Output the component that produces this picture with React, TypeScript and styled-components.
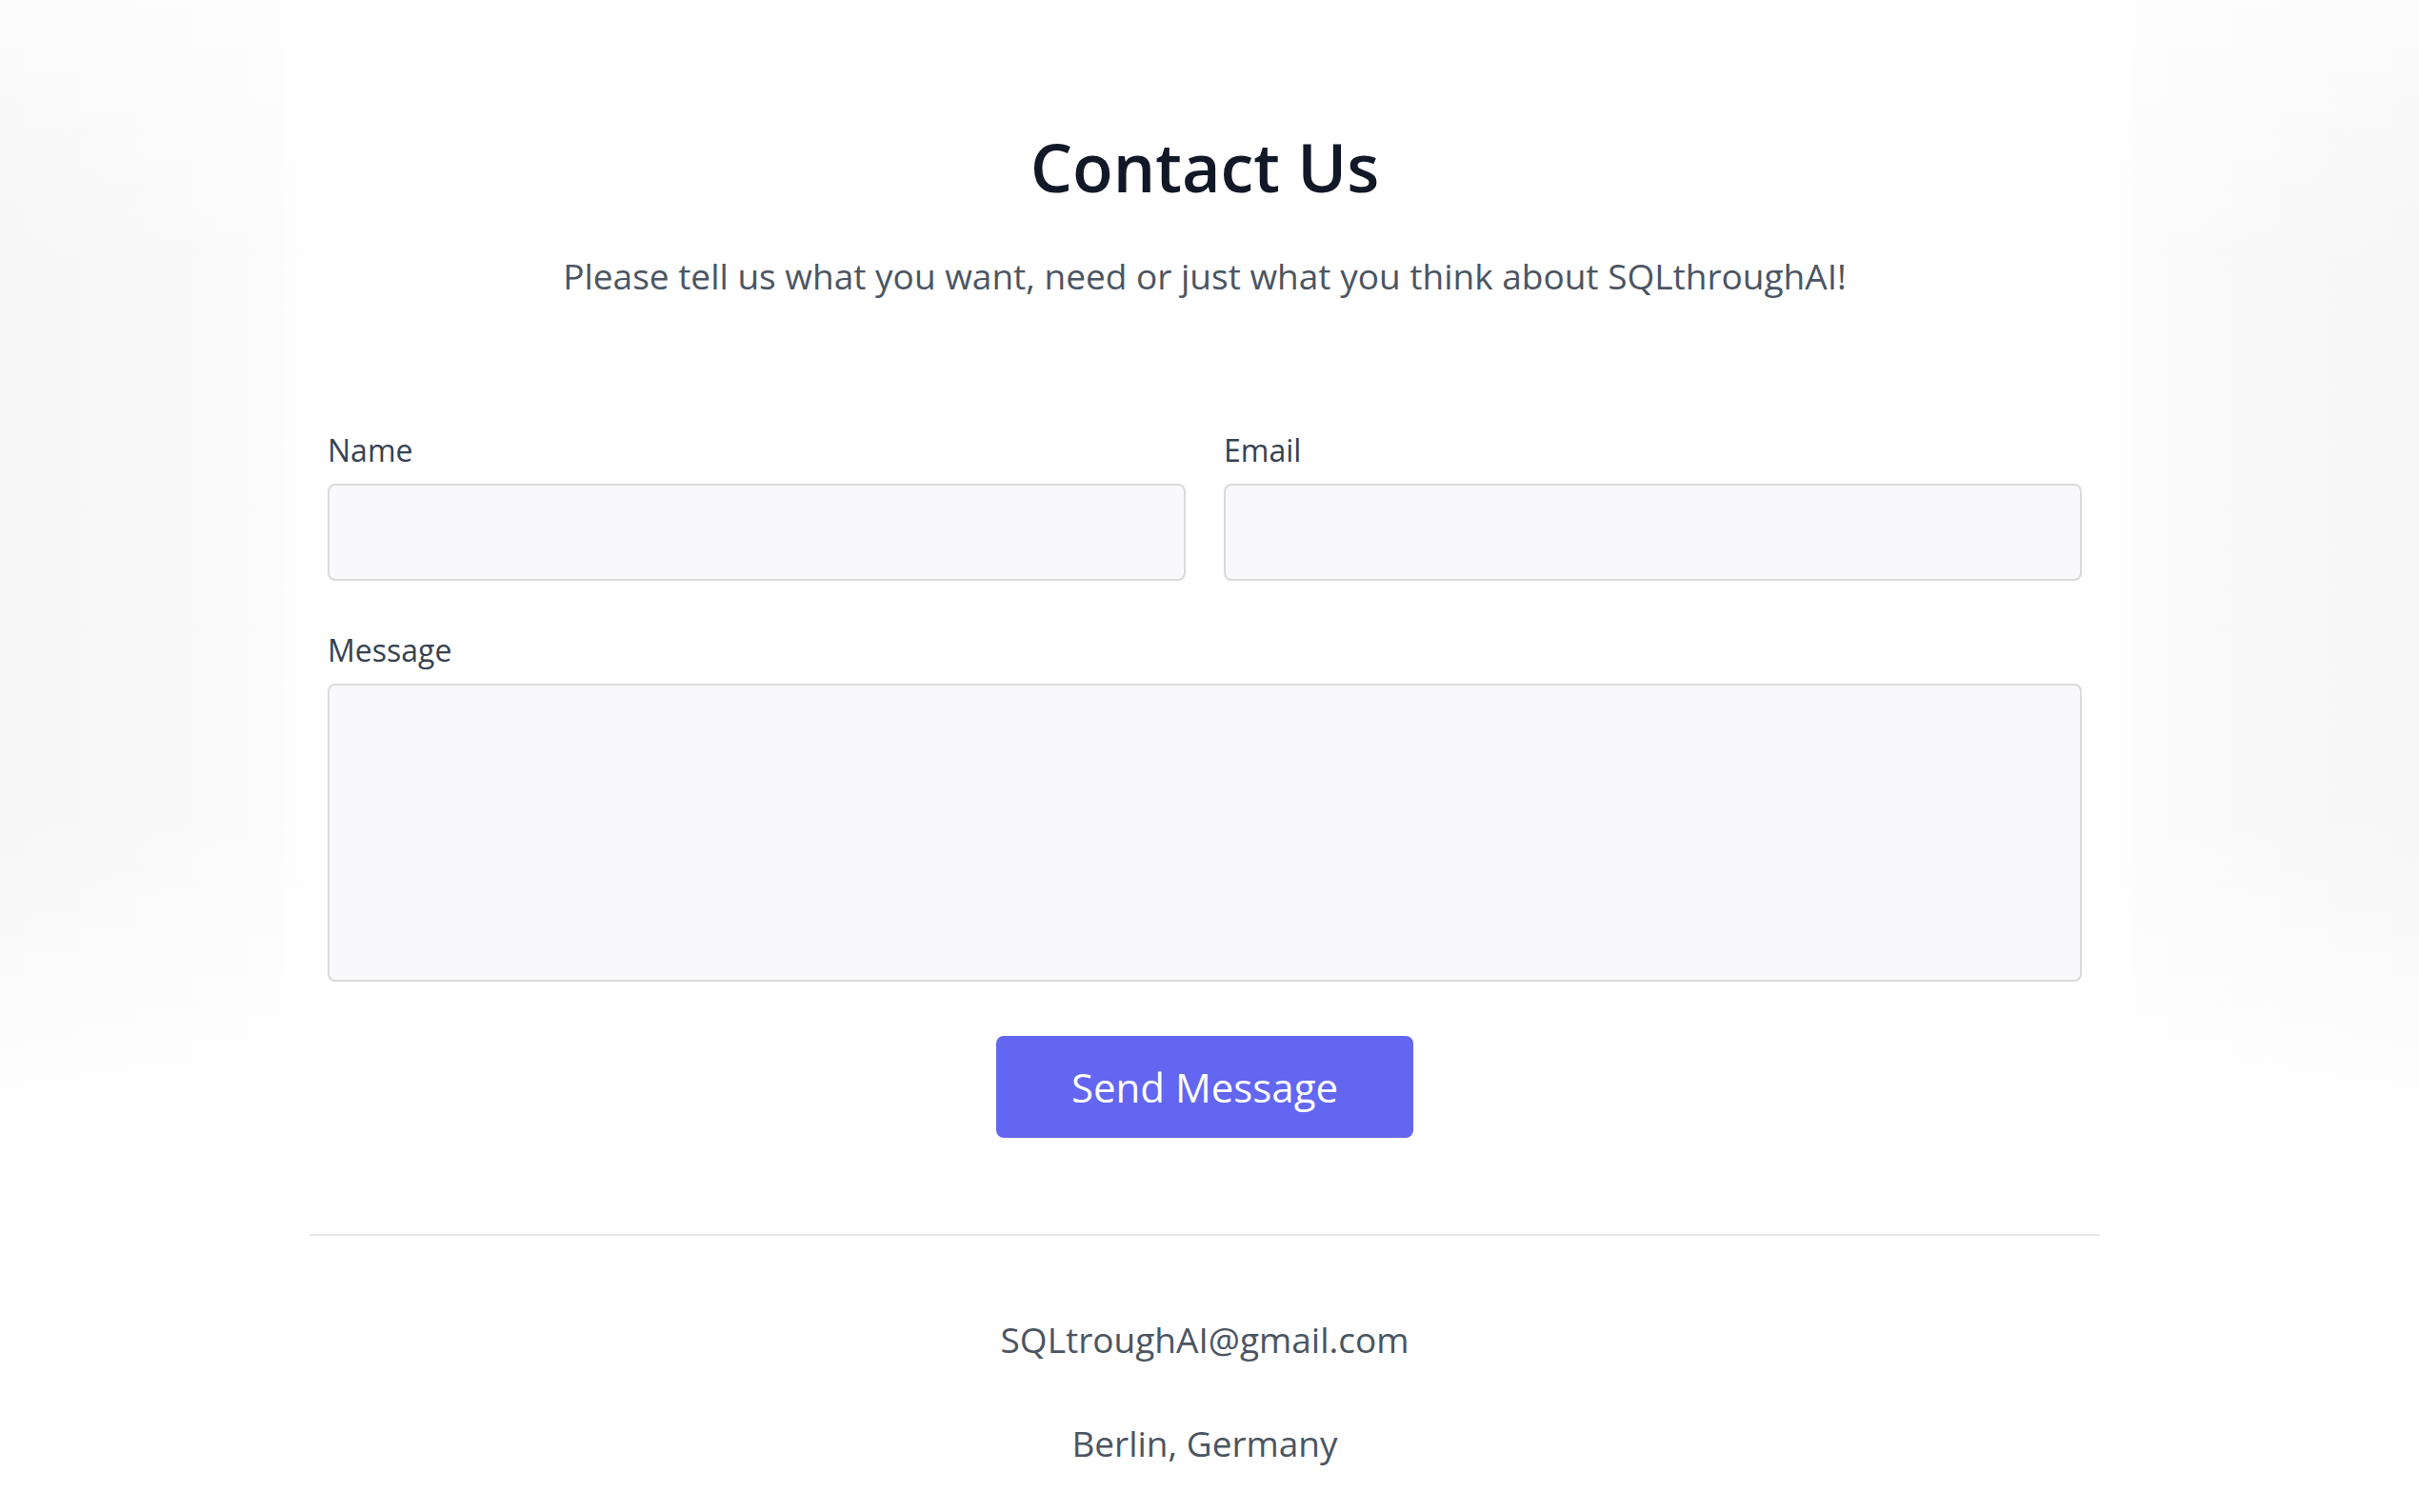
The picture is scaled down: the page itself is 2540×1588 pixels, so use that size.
import { createGlobalStyle, styled } from "styled-components";

const GlobalStyle = createGlobalStyle`
  * {
    box-sizing: border-box;
  }
  body {
    margin: 0;
    font-family: "Open Sans", "Noto Sans", sans-serif;
    background: #ffffff;
  }
`;

function App() {
  return (
    <>
      <GlobalStyle />
      <Page>
        <Main>
          <Title>Contact Us</Title>
          <Subtitle>
            Please tell us what you want, need or just what you think about
            SQLthroughAI!
          </Subtitle>
          <Form onSubmit={(e) => e.preventDefault()}>
            <Field>
              <Label htmlFor="name">Name</Label>
              <Input id="name" type="text" />
            </Field>
            <Field>
              <Label htmlFor="email">Email</Label>
              <Input id="email" type="email" />
            </Field>
            <Field wide>
              <Label htmlFor="message">Message</Label>
              <TextArea id="message" />
            </Field>
            <ButtonRow>
              <SendButton type="submit">Send Message</SendButton>
            </ButtonRow>
          </Form>
        </Main>
        <Divider />
        <Footer>
          <FooterLine>SQLtroughAI@gmail.com</FooterLine>
          <FooterLine>Berlin, Germany</FooterLine>
        </Footer>
      </Page>
    </>
  );
}

export default App;

const Page = styled.div`
  min-height: 100vh;
  padding: 132px 10px 0 0;
  background: linear-gradient(
        180deg,
        rgba(255, 255, 255, 0.6) 0%,
        rgba(255, 255, 255, 0) 25%,
        rgba(255, 255, 255, 0) 70%,
        #ffffff 100%
      )
      top / 100% 1200px no-repeat,
    linear-gradient(
        90deg,
        #f6f6f7 0%,
        #fbfbfb 11.5%,
        #fdfdfd 11.8%,
        #ffffff 14%,
        #ffffff 86%,
        #fdfdfd 88.1%,
        #fbfbfb 88.4%,
        #f6f6f7 100%
      )
      top / 100% 1200px no-repeat,
    #ffffff;
`;

const Main = styled.main`
  width: 1842px;
  margin: 0 auto;
  display: flex;
  flex-direction: column;
  align-items: center;
`;

const Title = styled.h1`
  margin: 0;
  font-size: 70px;
  line-height: 86px;
  font-weight: 600;
  color: #111827;
`;

const Subtitle = styled.p`
  margin: 47px 0 0 0;
  font-size: 37px;
  line-height: 50px;
  font-weight: 400;
  color: #4b5563;
`;

const Form = styled.form`
  width: 100%;
  margin-top: 137px;
  display: grid;
  grid-template-columns: 1fr 1fr;
  column-gap: 40px;
  row-gap: 52px;
`;

const Field = styled.div<{ wide?: boolean }>`
  display: flex;
  flex-direction: column;
  gap: 14px;
  grid-column: ${(props) => (props.wide ? "1 / -1" : "auto")};
`;

const Label = styled.label`
  font-size: 32px;
  line-height: 42px;
  color: #374151;
`;

const Input = styled.input`
  height: 102px;
  width: 100%;
  border: 2px solid #d9dadd;
  border-radius: 8px;
  background: #f9f9fb;
  padding: 0 24px;
  font-size: 30px;
  font-family: inherit;
  outline: none;
`;

const TextArea = styled.textarea`
  height: 313px;
  width: 100%;
  border: 2px solid #d9dadd;
  border-radius: 8px;
  background: #f9f9fb;
  padding: 20px 24px;
  font-size: 30px;
  font-family: inherit;
  resize: none;
  outline: none;
`;

const ButtonRow = styled.div`
  grid-column: 1 / -1;
  display: flex;
  justify-content: center;
  margin-top: 5px;
`;

const SendButton = styled.button`
  width: 438px;
  height: 107px;
  border: none;
  border-radius: 8px;
  background: #6366f1;
  color: #ffffff;
  font-family: inherit;
  font-size: 42px;
  font-weight: 400;
  cursor: pointer;
`;

const Divider = styled.hr`
  width: 1880px;
  margin: 101px auto 0 auto;
  border: none;
  border-top: 2px solid #e5e7eb;
`;

const Footer = styled.footer`
  display: flex;
  flex-direction: column;
  align-items: center;
  gap: 61px;
  padding-top: 85px;
`;

const FooterLine = styled.p`
  margin: 0;
  font-size: 37px;
  line-height: 48px;
  color: #4b5563;
`;
